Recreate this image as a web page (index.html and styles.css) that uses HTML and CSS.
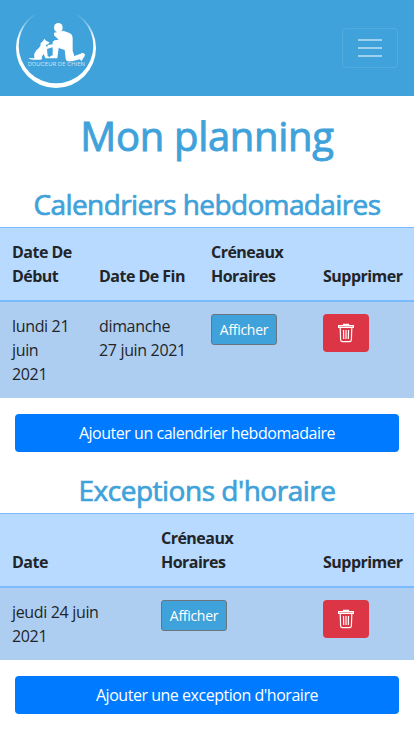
FILE: index.html
```html
<!DOCTYPE html>
<html lang="fr">
<head>
<meta charset="utf-8">
<meta name="viewport" content="width=device-width, initial-scale=1">
<title>Mon planning</title>
<link rel="stylesheet" href="styles.css">
</head>
<body>
<svg class="defs" width="0" height="0" aria-hidden="true">
  <symbol id="trash" viewBox="0 0 18 20">
    <path d="M6.500 2V1.400h5V2M1.600 2.600h14.800v1.800H1.600zM3.200 4.700l.4 12c.1 1.400.8 2 2 2h6.800c1.200 0 1.900-.6 2-2l.4-12M6.500 7l.2 9M9 7v9M11.500 7l-.2 9"/>
  </symbol>
</svg>
<header class="navbar">
  <a class="brand" href="#" aria-label="Douceur de chien">
    <svg width="80" height="80" viewBox="24 12 240 240">
      <defs>
        <linearGradient id="fade" x1="0" y1="0" x2="0" y2="1">
          <stop offset="0.06" stop-color="#fff" stop-opacity="0"/>
          <stop offset="0.4" stop-color="#fff"/>
        </linearGradient>
      </defs>
      <path fill="url(#fade)" fill-rule="evenodd" d="M144 12a120 120 0 1 0 0 240a120 120 0 1 0 0-240zM144 14a112 112 0 1 1 0 224a112 112 0 1 1 0-224z"/>
      <g fill="#fff">
        <ellipse cx="151" cy="71" rx="13" ry="14"/>
        <path d="M138 86L166 80L186 88Q194 92 194 102V140L199 156L218 149Q220 146 227 148Q233 150 230 156L220 172L216 166L192 172H180Q174 171 173 164L170 138L152 132L148 163H124Q124 157 134 154L134 130H120Q116 127 120 123L134 121Q132 112 140 109L152 107L138 94z"/>
        <path d="M105 111L109 104L114 110L124 115Q122 124 113 122L116 128L133 125V130L117 135L119 157Q127 158 124 163H112L107 150L101 159Q105 166 98 167H76Q66 167 61 162L79 163Q75 145 92 133Q99 127 98 118z"/>
      </g>
      <text class="brand-name" x="145" y="186" text-anchor="middle" textLength="172" lengthAdjust="spacingAndGlyphs">DOUCEUR DE CHIEN</text>
    </svg>
  </a>
  <button class="toggler" type="button" aria-label="Menu">
    <svg width="30" height="30" viewBox="0 0 30 30"><path d="M3 7h24M3 15h24M3 23h24"/></svg>
  </button>
</header>
<main>
  <h1>Mon planning</h1>
  <section>
    <h2 class="title-week">Calendriers hebdomadaires</h2>
    <table>
      <colgroup><col class="c-start"><col class="c-end"><col class="c-slots"><col class="c-del"></colgroup>
      <thead><tr><th>Date De<br>Début</th><th>Date De Fin</th><th>Créneaux<br>Horaires</th><th>Supprimer</th></tr></thead>
      <tbody><tr>
        <td>lundi 21<br>juin<br>2021</td>
        <td>dimanche<br>27 juin 2021</td>
        <td><button class="btn show" type="button">Afficher</button></td>
        <td><button class="btn delete" type="button" aria-label="Supprimer"><svg width="18" height="20"><use href="#trash"/></svg></button></td>
      </tr></tbody>
    </table>
    <button class="btn add" type="button">Ajouter un calendrier hebdomadaire</button>
  </section>
  <section>
    <h2 class="title-exc">Exceptions d'horaire</h2>
    <table>
      <colgroup><col class="c-date"><col class="c-wide"><col class="c-del"></colgroup>
      <thead><tr><th>Date</th><th>Créneaux<br>Horaires</th><th>Supprimer</th></tr></thead>
      <tbody><tr>
        <td>jeudi 24 juin<br>2021</td>
        <td><button class="btn show" type="button">Afficher</button></td>
        <td><button class="btn delete" type="button" aria-label="Supprimer"><svg width="18" height="20"><use href="#trash"/></svg></button></td>
      </tr></tbody>
    </table>
    <button class="btn add" type="button">Ajouter une exception d'horaire</button>
  </section>
</main>
</body>
</html>
```
FILE: styles.css
```css
*, *::before, *::after { box-sizing: border-box; }
body {
  margin: 0;
  font: 400 16px/24px "Open Sans", "Noto Sans", sans-serif;
  letter-spacing: -0.34px;
  color: #212529;
  background: #fff;
}
.defs { display: block; }
.navbar {
  display: flex;
  align-items: center;
  justify-content: space-between;
  height: 96px;
  padding: 8px 16px;
  background: #3fa2da;
}
.brand, .brand svg { display: block; }
.brand-name { font: 400 15px "Inter", sans-serif; letter-spacing: 0; fill: #fff; fill-opacity: .7; }
.toggler {
  width: 56px;
  height: 40px;
  padding: 4px 12px;
  border: 1px solid rgba(255, 255, 255, .1);
  border-radius: 4px;
  background: transparent;
}
.toggler svg { display: block; fill: none; stroke: rgba(255, 255, 255, .5); stroke-width: 2; }
main { padding-top: 16px; }
h1, h2 { margin: 0; font-weight: 500; text-align: center; color: #3fa2da; white-space: nowrap; }
h1 { font-size: 40px; line-height: 48px; margin-bottom: 27px; letter-spacing: -0.3px; -webkit-text-stroke: 0.9px #3fa2da; }
h2 { font-size: 28px; line-height: 34px; margin-bottom: 6px; letter-spacing: -0.62px; -webkit-text-stroke: 0.7px #3fa2da; }
.title-exc { letter-spacing: -0.48px; }
section { margin-bottom: 21px; }
table { width: 100%; table-layout: fixed; border-collapse: separate; border-spacing: 0; background: #b8daff; }
.c-start { width: 87px; }
.c-end, .c-slots { width: 112px; }
.c-date { width: 149px; }
.c-wide { width: 162px; }
.c-del { width: 103px; }
th, td { padding: 12px 0 12px 12px; text-align: left; white-space: nowrap; }
th { height: 75px; vertical-align: bottom; font-weight: 700; letter-spacing: -0.52px; border-top: 1px solid #7abaff; border-bottom: 2px solid #7abaff; }
td { vertical-align: top; background: #aecef1; }
.btn { display: block; font-family: inherit; letter-spacing: inherit; color: #fff; white-space: nowrap; border: 1px solid transparent; border-radius: 4px; }
.show { width: 66px; height: 31px; padding: 0; font-size: 14px; line-height: 21px; letter-spacing: -0.3px; background: #3fa2da; border-color: #6c757d; border-radius: 3px; }
.delete { width: 46px; height: 38px; padding: 0; background: #dc3545; }
.delete svg { display: block; margin: -1px auto 0; fill: none; stroke: #fff; stroke-width: 1.2; }
.add { width: 384px; height: 38px; margin: 16px auto 0 15px; padding: 6px 12px; font-size: 16px; line-height: 24px; letter-spacing: -0.47px; background: #007bff; }
```
